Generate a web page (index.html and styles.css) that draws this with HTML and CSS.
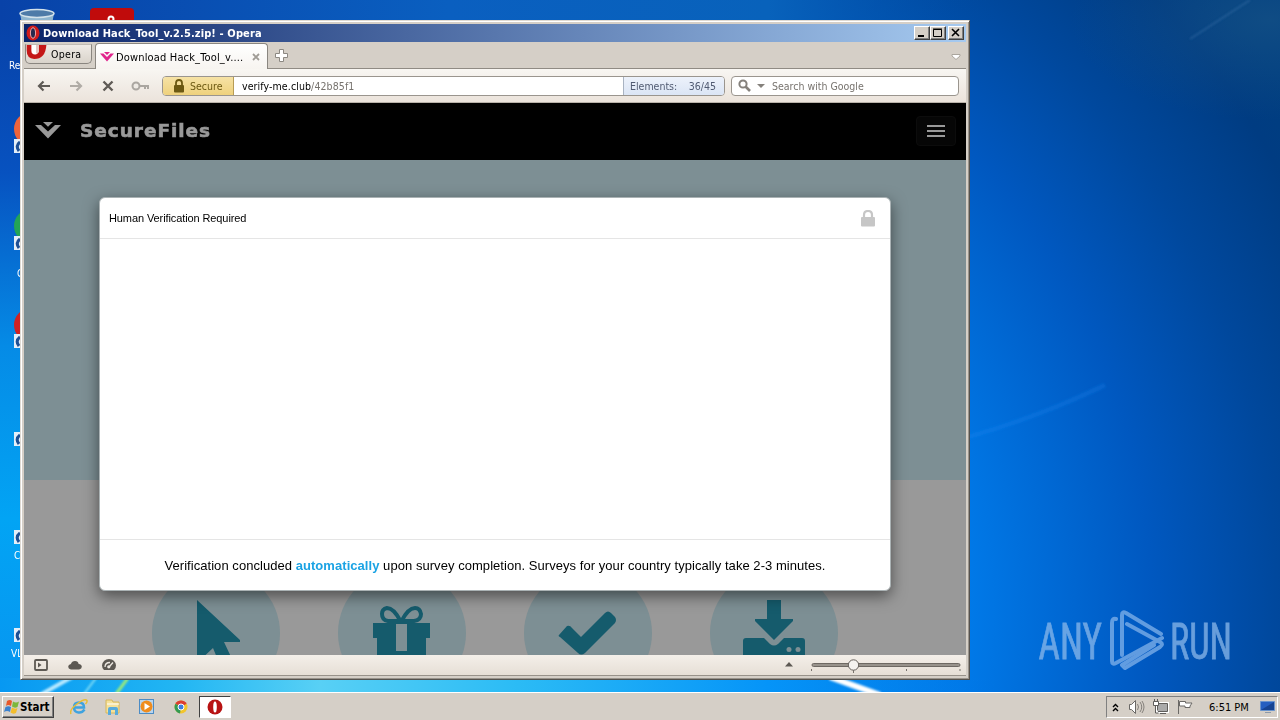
FILE: index.html
```
<!DOCTYPE html>
<html lang="en">
<head>
    <meta charset="UTF-8">
    <title>Download Hack_Tool_v.2.5.zip! - Opera</title>
    <link rel="stylesheet" href="styles.css">
</head>
<body>
    <div class="desktop">
        <svg class="wallpaper" width="1280" height="692" viewBox="0 0 1280 692">
            <defs>
                <radialGradient id="sky" gradientUnits="userSpaceOnUse" cx="480" cy="610" r="960">
                    <stop offset="0" stop-color="#18a8fa"/>
                    <stop offset=".3" stop-color="#0694f4"/>
                    <stop offset=".51" stop-color="#0079e8"/>
                    <stop offset=".7" stop-color="#0058c0"/>
                    <stop offset=".83" stop-color="#00489d"/>
                    <stop offset=".95" stop-color="#003c82"/>
                    <stop offset="1" stop-color="#003e80"/>
                </radialGradient>
                <linearGradient id="left" x2="0" y2="1">
                    <stop offset="0" stop-color="#0840a5"/>
                    <stop offset=".25" stop-color="#0752c0"/>
                    <stop offset=".5" stop-color="#058be6"/>
                    <stop offset=".75" stop-color="#02a4f4"/>
                    <stop offset="1" stop-color="#0795f0"/>
                </linearGradient>
                <linearGradient id="top">
                    <stop offset="0" stop-color="#0842a8"/>
                    <stop offset=".35" stop-color="#0a5fc0"/>
                    <stop offset=".6" stop-color="#0862bb"/>
                    <stop offset=".78" stop-color="#00489a" stop-opacity="0"/>
                </linearGradient>
                <linearGradient id="bottom">
                    <stop offset="0" stop-color="#0798f2"/>
                    <stop offset=".14" stop-color="#22b6f3"/>
                    <stop offset=".25" stop-color="#58d0f5"/>
                    <stop offset=".4" stop-color="#2cbcf5"/>
                    <stop offset=".6" stop-color="#0594f8"/>
                    <stop offset=".78" stop-color="#0075e8" stop-opacity="0"/>
                </linearGradient>
                <radialGradient id="haze">
                    <stop offset="0" stop-color="#1f5a88" stop-opacity=".5"/>
                    <stop offset="1" stop-color="#1c5488" stop-opacity="0"/>
                </radialGradient>
                <filter id="soft"><feGaussianBlur stdDeviation="1.2"/></filter>
            </defs>
            <rect width="1280" height="692" fill="url(#sky)"/>
            <rect width="24" height="692" fill="url(#left)"/>
            <rect width="1280" height="22" fill="url(#top)"/>
            <rect y="678" width="1280" height="14" fill="url(#bottom)"/>
            <ellipse cx="1270" cy="20" rx="200" ry="100" fill="url(#haze)"/>
            <g filter="url(#soft)" fill="none">
                <path d="M1190 39L1250 0" stroke="#3b73ab" stroke-width="2" opacity=".45"/>
                <path d="M968 437C1020 422 1060 407 1105 385" stroke="#1b8cf5" stroke-width="5" opacity=".22"/>
                <path d="M830 677L880 695" stroke="#fff" stroke-width="6"/>
                <path d="M72 677L40 695" stroke="#b9eaff" stroke-width="4"/>
                <path d="M96 678L84 694" stroke="#7fdcf5" stroke-width="2"/>
                <path d="M128 678L116 694" stroke="#9beb7a" stroke-width="3"/>
            </g>
        </svg>

        <!-- desktop shortcuts, mostly hidden by the window -->
        <svg class="shortcuts" width="140" height="692" viewBox="0 0 140 692">
            <path d="M20 13L25 42H49L54 13Z" fill="#8fb5cf"/>
            <ellipse cx="37" cy="13.5" rx="17" ry="4" fill="#4e7ba8" stroke="#d4e2ea" stroke-width="1.500"/>
            <rect x="90" y="8" width="44" height="40" rx="4" fill="#c00b0b"/>
            <circle cx="111" cy="19" r="2.5" fill="none" stroke="#fff" stroke-width="2"/>
            <circle cx="31" cy="129" r="17" fill="#f0643a"/>
            <circle cx="31" cy="226" r="17" fill="#23a455"/>
            <circle cx="31" cy="325" r="17" fill="#d02222"/>
            <g fill="#e4eef8">
                <path d="M14 139h10v14H14zM14 236h10v14H14zM14 334h10v14H14zM14 432h10v14H14zM14 530h10v14H14zM14 628h10v14H14z"/>
            </g>
            <path d="M20 142q-5 4-1 9M20 239q-5 4-1 9M20 337q-5 4-1 9M20 435q-5 4-1 9M20 533q-5 4-1 9M20 631q-5 4-1 9" stroke="#1d4f94" stroke-width="3" fill="none"/>
            <g class="shortcut-label">
                <text x="9" y="69">Re</text>
                <text x="17" y="277">G</text>
                <text x="14" y="559">C</text>
                <text x="11" y="657">VL</text>
            </g>
        </svg>

        <div class="window">
            <div class="titlebar">
                <svg width="14" height="16" viewBox="0 0 14 16"><ellipse cx="7" cy="8" rx="6.5" ry="7.5" fill="#cf1b1b"/><ellipse cx="7" cy="8" rx="2.6" ry="5.3" fill="#26294e" stroke="#f0a5a5"/></svg>
                <span class="title">Download Hack_Tool_v.2.5.zip! - Opera</span>
                <span class="winbtn"><svg width="14" height="12"><path d="M3 9h6" stroke="#000" stroke-width="2"/></svg></span>
                <span class="winbtn"><svg width="14" height="12"><path d="M2.5 2.5h8v7h-8zM2 2h9" stroke="#000" fill="none"/></svg></span>
                <span class="winbtn close"><svg width="14" height="12"><path d="M3 2l7 7M10 2l-7 7" stroke="#000" stroke-width="1.6"/></svg></span>
            </div>

            <div class="tabbar">
                <div class="opera-menu">
                    <svg width="22" height="15" viewBox="0 0 22 16"><path d="M0 0H21Q20 15 8 15Q0 14 0 6Z" fill="#c41717"/><path d="M5 0H13V7Q12 10 9 10Q5 10 5 6Z" fill="#fff"/><path d="M10 0h3v7q-1 2-3 2z" fill="#e4c5c1"/></svg>
                    <span>Opera</span>
                </div>
                <div class="tab">
                    <svg width="14" height="10" viewBox="0 0 28 20"><path d="M0 3H7L14 10L21 3H28L14 19ZM8 0H20L14 6Z" fill="#e0258c"/></svg>
                    <span>Download Hack_Tool_v....</span>
                    <svg class="tab-close" width="8" height="8"><path d="M1 1l6 6M7 1l-6 6" stroke="#a09c96" stroke-width="1.800"/></svg>
                </div>
                <svg class="newtab" width="13" height="13"><path d="M4.5.5h4v4h4v4h-4v4h-4v-4h-4v-4h4z" fill="#fff" stroke="#8c8882"/></svg>
                <svg class="tabmenu" width="10" height="7"><path d="M1 1.5h8v1.500l-4 3.500-4-3.500z" fill="#fff" stroke="#aaa59d"/></svg>
            </div>

            <div class="toolbar">
                <div class="nav">
                    <svg width="14" height="14" viewBox="0 0 14 14"><path d="M6.500 2.500L2 7l4.500 4.500M2 7h11" stroke="#5f5b56" stroke-width="2.200" fill="none"/></svg>
                    <svg width="14" height="14" viewBox="0 0 14 14"><path d="M7.500 2.500L12 7l-4.500 4.500M12 7H1" stroke="#b0aca6" stroke-width="2.200" fill="none"/></svg>
                    <svg width="14" height="14" viewBox="0 0 14 14"><path d="M2.500 2.500l9 9M11.500 2.500l-9 9" stroke="#5f5b56" stroke-width="2.400"/></svg>
                    <svg class="key" width="20" height="10" viewBox="0 0 20 10"><path d="M8.500 5H18M14 5v3M17 5v3" stroke="#aaa6a0" stroke-width="2" fill="none"/><circle cx="5" cy="5" r="3.500" fill="#eeeae4" stroke="#aaa6a0" stroke-width="2"/></svg>
                </div>
                <div class="address">
                    <div class="secure">
                        <svg width="12" height="14" viewBox="0 0 12 14"><path d="M3 7V4q0-3 3-3t3 3v3" stroke="#6b5812" stroke-width="1.800" fill="none"/><rect x="1" y="6" width="10" height="7.500" rx="1" fill="#6b5812"/></svg>
                        <span>Secure</span>
                    </div>
                    <div class="url">verify-me.club<span>/42b85f1</span></div>
                    <div class="elements"><span>Elements:</span><span>36/45</span></div>
                </div>
                <div class="search">
                    <svg width="13" height="13" viewBox="0 0 13 13"><circle cx="5" cy="5" r="3.600" stroke="#85817c" stroke-width="2" fill="none"/><path d="M7.500 7.500l4.500 4.500" stroke="#85817c" stroke-width="2.600"/></svg>
                    <svg width="8" height="4"><path d="M0 0h8l-4 4z" fill="#85817c"/></svg>
                    <span>Search with Google</span>
                </div>
            </div>

            <div class="page">
                <div class="navbar">
                    <svg width="26" height="17" viewBox="0 0 26 17"><path d="M0 3H6L13 9.500L20 3H26L13 16.500ZM8 0H18L13 4.800Z" fill="#999"/></svg>
                    <span class="brand">SecureFiles</span>
                    <div class="burger"><i></i><i></i><i></i></div>
                </div>
                <div class="hero"></div>
                <div class="steps">
                    <div class="step"><svg width="128" height="128" viewBox="0 0 128 128"><path d="M45 31L88 71V73H72L80 90L68 96L61 79L45 94Z"/></svg></div>
                    <div class="step"><svg width="128" height="128" viewBox="0 0 128 128"><path d="M35 54H92V69H88V96H39V69H35Z"/><path d="M58 55h11v27H58z" fill="#7d8f94"/><path d="M63 53Q56 39 49 39Q44 40 44 45Q44 51 50 52H76Q83 51 83 45Q82 39 77 39Q70 39 63 53" fill="none" stroke="#155b6c" stroke-width="4"/></svg></div>
                    <div class="step"><svg width="128" height="128" viewBox="0 0 128 128"><path d="M35 66L43 57Q46 56 48 59L57 68L81 44Q84 41 87 44L91 48Q93 51 91 54L61 84Q57 87 54 84L36 68Q34 67 35 66"/></svg></div>
                    <div class="step"><svg width="128" height="128" viewBox="0 0 128 128"><path d="M57 31H71V50H83V52L64 71L45 52V50H57Z"/><path d="M33 72Q33 69 36 69H54L60 75Q64 78 68 75L74 69H92Q95 69 95 72V96H33Z"/><circle cx="79" cy="80.500" r="2.500" fill="#7d8f94"/><circle cx="88" cy="80.500" r="2.500" fill="#7d8f94"/></svg></div>
                </div>

                <div class="modal">
                    <div class="modal-header">
                        <span>Human Verification Required</span>
                        <svg width="14" height="17" viewBox="0 0 14 17"><path d="M3 8V5q0-4 4-4t4 4v3" stroke="#c6c6c6" stroke-width="2.200" fill="none"/><rect y="7" width="14" height="9.500" rx="1" fill="#c6c6c6"/></svg>
                    </div>
                    <div class="modal-body"></div>
                    <div class="modal-footer">Verification concluded <b>automatically</b> upon survey completion. Surveys for your country typically take 2-3 minutes.</div>
                </div>
            </div>

            <div class="statusbar">
                <svg width="14" height="12"><rect x="1" y="1" width="12" height="10" rx="1" fill="none" stroke="#5d5953" stroke-width="1.800"/><path d="M4 3.500l3.500 2.500-3.500 2.500z" fill="#5d5953"/></svg>
                <svg width="14" height="10" viewBox="0 0 15 11"><path d="M3 10.500Q0 10 0 7.500Q0 5 3 4.500Q4 1 7.500 1Q11 1 11.500 4.500Q15 5 15 7.500Q15 10 12 10.500Z" fill="#5d5953"/></svg>
                <svg width="14" height="12"><path d="M2 11Q0 9 0 6.500Q1 0 7 0Q13 0 14 6.500Q14 9 12 11Z" fill="#5d5953"/><path d="M3 8Q3 3.500 8 3.500M7 8l4-4.500" stroke="#eee9e2" stroke-width="1.300" fill="none"/><circle cx="6.800" cy="7.800" r="1.600" fill="#eee9e2"/></svg>
                <svg class="up" width="8" height="5"><path d="M0 4.500L4 0l4 4.500z" fill="#5d5953"/></svg>
                <svg class="zoom" width="150" height="16"><rect x="1" y="6.500" width="148" height="3" rx="1.500" fill="#98938c" stroke="#6e6963"/><path d="M.5 12v2M42.500 13v3M95.500 12v2M149 12v2" stroke="#77726c"/><circle cx="42.500" cy="8" r="5.200" fill="#f4f2ef" stroke="#66615c"/></svg>
            </div>
        </div>

        <svg class="watermark" width="196" height="66" viewBox="0 0 196 66">
            <g fill="#8bb8ea" stroke="#8bb8ea" stroke-width=".8" opacity=".75">
                <text x="1" y="51" transform="scale(.62 1)" textLength="102" lengthAdjust="spacingAndGlyphs">ANY</text>
                <text x="213" y="51" transform="scale(.62 1)" textLength="100" lengthAdjust="spacingAndGlyphs">RUN</text>
            </g>
            <g fill="none" stroke="#73a8e6" stroke-width="4" stroke-linejoin="round" stroke-linecap="round" opacity=".85">
                <path d="M78 11Q74 10 74 15V53Q74 57 78 55L124 30"/>
                <path d="M84 47V7Q84 3 88 5L123 26"/>
                <path d="M89 16L122 34Q126 36 122 39L87 60L84 57L116 37"/>
            </g>
        </svg>
    </div>

    <div class="taskbar">
        <div class="start">
            <svg width="16" height="16" viewBox="0 0 16 16"><path d="M3 2q3-2 5 0L7 7q-3-2-5 0z" fill="#e8582a"/><path d="M9 2.500q3 2 6 0L13.500 8q-3 1.500-5.500-.5z" fill="#7cb73a"/><path d="M1.500 8q3-1.500 5.500 0L6 13q-3-2-6 0z" fill="#3b82cf"/><path d="M8 8.500q3 2 5.500.5L12 14q-3 1.500-5.500-.5z" fill="#f3bd2b"/></svg>
            <b>Start</b>
        </div>
        <div class="quick">
            <svg width="18" height="18" viewBox="0 0 18 18"><path d="M14.500 11.500Q12 15 8.500 14.500Q4 14 4 9.500Q4 4.500 9 4.500Q14 4.500 14 9.500H5" fill="none" stroke="#3fa3df" stroke-width="2.500"/><path d="M1 16Q-1 12 7 6T17 2.500Q17.500 4 15.500 6" fill="none" stroke="#e8bd35" stroke-width="1.500"/></svg>
            <svg width="18" height="18" viewBox="0 0 18 18"><path d="M2 2h6l1 2h6v11H2z" fill="#f5e19a" stroke="#d5b75c"/><path d="M4 17v-6q0-2 2-2h6q2 0 2 2v6h-3v-5H7v5z" fill="#58abdc"/><path d="M3 6h12" stroke="#fff"/></svg>
            <svg width="18" height="18" viewBox="0 0 18 18"><rect x="1.500" y="1.500" width="14" height="14" fill="#b9d5ee" stroke="#4c8cc5"/><circle cx="8.500" cy="8.500" r="6" fill="#ef8c1e"/><path d="M6.500 5l5.500 3.500L6.500 12z" fill="#fff"/></svg>
            <svg width="18" height="18" viewBox="0 0 18 18"><circle cx="9" cy="9" r="6.500" fill="#f2c52c"/><path d="M9 9L3.400 5.700A6.500 6.500 0 0 1 14.600 5.700Z" fill="#dc3e32"/><path d="M9 9L3.400 5.700A6.500 6.500 0 0 0 8 15.400Z" fill="#349a52"/><circle cx="9" cy="9" r="3" fill="#3d7fe0" stroke="#fff"/></svg>
        </div>
        <div class="task">
            <svg width="16" height="16" viewBox="0 0 16 16"><ellipse cx="8" cy="8" rx="7.500" ry="7.500" fill="#b81212"/><ellipse cx="8" cy="8" rx="1.800" ry="5.500" fill="#fff"/></svg>
        </div>
        <div class="tray">
            <svg width="7" height="9"><path d="M1 4l2.500-2.500L6 4M1 8l2.500-2.500L6 8" fill="none" stroke="#000" stroke-width="1.400"/></svg>
            <svg class="sound" width="17" height="16"><path d="M1.500 5.500h2l4-4v13l-4-4h-2z" fill="#fff" stroke="#6b6966"/><path d="M9.500 5q2 3 0 6M12 3q3.500 5 0 10M14 2q4 6 0 12" fill="none" stroke="#85817c"/></svg>
            <svg class="net" width="16" height="16"><path d="M4.500 4.500h10v8h-10z" fill="#aaa" stroke="#fff" stroke-width="3"/><path d="M4.500 4.500h10v8h-10zM7 14.500h6" fill="#aaa" stroke="#5f5d5b"/><path d="M.5 2.500h5v4h-5zM1.500 0v2M4.500 0v2M2.500 7v7h3" fill="#fff" stroke="#5f5d5b"/></svg>
            <svg class="flag" width="17" height="16"><path d="M1.500 1v14M2.500 2.500h6v1.500h6.500l-2 3 0 1.500h-5v-1.500H2.500z" fill="#fff" stroke="#6b6966"/></svg>
            <span class="clock">6:51 PM</span>
            <svg class="show" width="16" height="14"><path d="M.5 1.500h14v9H.5z" fill="#255fc0" stroke="#6a94cc"/><path d="M1 10L14 2v8z" fill="#164492"/><path d="M5 12.500h6" stroke="#8b99aa"/></svg>
        </div>
    </div>
</body>
</html>
```
FILE: styles.css
```
* { box-sizing: border-box; }
body {
    margin: 0;
    width: 1280px;
    height: 720px;
    overflow: hidden;
    font-family: "DejaVu Sans Condensed", "DejaVu Sans", sans-serif;
    font-stretch: condensed;
    font-size: 11px;
    color: #000;
}
svg { display: block; flex: none; }
span, b { white-space: nowrap; }

.desktop { position: relative; height: 692px; overflow: hidden; background: #0079e8; }
.wallpaper, .shortcuts { position: absolute; left: 0; top: 0; }
.shortcut-label { fill: #fff; font-size: 10px; }
.watermark { position: absolute; left: 1038px; top: 608px; }
.watermark text { font-family: Roboto, sans-serif; font-size: 50px; font-weight: 400; }

/* window */
.window {
    position: absolute;
    left: 20px;
    top: 20px;
    width: 950px;
    height: 660px;
    padding: 3px;
    background: #d5cfc7;
    border: 1px solid;
    border-color: #ded9d2 #55524e #55524e #ded9d2;
    box-shadow: inset 1px 1px #fff, inset -1px -1px #99938b;
    display: flex;
    flex-direction: column;
}
.titlebar {
    height: 18px;
    display: flex;
    align-items: center;
    padding: 0 2px;
    background: linear-gradient(90deg, #0a246a, #a6caf0);
    color: #fff;
    font-weight: bold;
}
.title { flex: 1; margin-left: 3px; font-size: 11px; letter-spacing: 0.12px; }
.winbtn {
    width: 16px;
    height: 14px;
    background: #d5cfc7;
    border: 1px solid;
    border-color: #fff #404040 #404040 #fff;
    box-shadow: inset -1px -1px #808080;
}
.close { margin-left: 2px; }

.tabbar {
    height: 27px;
    display: flex;
    background: #d5cfc7;
    border-bottom: 1px solid #908b84;
}
.opera-menu {
    width: 67px;
    height: 20px;
    margin: 2px 0 0 1px;
    display: flex;
    border: 1px solid #8a8680;
    border-top-color: #c0bbb4;
    border-radius: 0 0 5px 5px;
    background: linear-gradient(#efebe6, #d9d3cb);
}
.opera-menu span { margin: 3px 0 0 3px; font-size: 10.5px; letter-spacing: 0.3px; }
.tab {
    width: 173px;
    height: 26px;
    margin: 1px 0 0 3px;
    padding: 0 7px 0 4px;
    display: flex;
    align-items: center;
    border: 1px solid #8a8680;
    border-bottom: 0;
    border-radius: 4px 4px 0 0;
    background: linear-gradient(#fff, #f7f4f0);
}
.tab span { margin: 1px 0 0 2px; flex: 1; font-size: 11px; letter-spacing: 0.16px; }
.newtab { margin: 7px 0 0 7px; }
.tabmenu { margin: 11px 5px 0 auto; }

.toolbar {
    height: 34px;
    display: flex;
    align-items: center;
    padding: 0 7px 0 13px;
    background: linear-gradient(#f8f6f2, #ebe3db);
    border-bottom: 1px solid #b9b2a9;
}
.nav { width: 125px; display: flex; align-items: center; gap: 18px; }
.key { margin-left: -2px; }
.address, .search {
    height: 20px;
    border: 1px solid #9a958e;
    border-radius: 4px;
    background: #fff;
    display: flex;
    align-items: center;
    overflow: hidden;
}
.address { width: 563px; }
.secure {
    width: 71px;
    height: 18px;
    padding-left: 10px;
    display: flex;
    align-items: center;
    gap: 5px;
    color: #6b5812;
    background: linear-gradient(#f6e2a5, #eed17d);
    border-right: 1px solid #b79c55;
}
.url { flex: 1; padding-left: 8px; font-size: 10.5px; letter-spacing: 0.1px; }
.url span { color: #77736e; }
.elements {
    width: 101px;
    height: 18px;
    padding: 1px 8px 0 6px;
    display: flex;
    align-items: center;
    justify-content: space-between;
    color: #515b72;
    background: linear-gradient(#edf2fb, #dbe5f5);
    border-left: 1px solid #a9b3c2;
}
.secure, .elements, .search { font-size: 10.5px; }
.search { width: 228px; margin-left: 6px; padding-left: 6px; color: #77736e; }
.search span { margin-left: 7px; }
.search svg + svg { margin-left: 6px; }

/* web page */
.page {
    position: relative;
    height: 552px;
    overflow: hidden;
    background: #999;
    font-family: "Liberation Sans", Arial, sans-serif;
}
.navbar {
    height: 57px;
    display: flex;
    align-items: center;
    padding: 0 10px 2px 11px;
    background: #000;
}
.brand {
    flex: 1;
    margin-left: 19px;
    color: #999;
    font-family: "DejaVu Sans", sans-serif;
    font-stretch: normal;
    font-size: 18.5px;
    font-weight: bold;
    letter-spacing: 0.95px;
    -webkit-text-stroke: 0.6px #999;
}
.burger {
    width: 40px;
    height: 30px;
    display: flex;
    flex-direction: column;
    align-items: center;
    justify-content: center;
    gap: 3px;
    background: #060606;
    border: 1px solid #0c0c0c;
    border-radius: 4px;
}
.burger i { width: 18px; height: 2px; background: #999; }
.hero { height: 320px; background: #7d8f94; }
.steps { display: flex; gap: 58px; padding: 89px 0 0 128px; }
.step {
    width: 128px;
    height: 128px;
    flex: none;
    border-radius: 50%;
    background: #7d8f94;
    fill: #155b6c;
}
.modal {
    position: absolute;
    left: 75px;
    top: 94px;
    width: 792px;
    height: 394px;
    display: flex;
    flex-direction: column;
    background: #fff;
    border: 1px solid #aab2b4;
    border-radius: 6px;
    box-shadow: 0 5px 15px rgba(0, 0, 0, 0.5);
}
.modal-header {
    height: 41px;
    display: flex;
    align-items: center;
    justify-content: space-between;
    padding: 0 15px 0 9px;
    font-size: 11px;
    letter-spacing: -0.1px;
    border-bottom: 1px solid #e5e5e5;
}
.modal-body { flex: 1; }
.modal-footer {
    height: 51px;
    line-height: 51px;
    text-align: center;
    white-space: nowrap;
    font-size: 13px;
    letter-spacing: 0.05px;
    border-top: 1px solid #e5e5e5;
}
.modal-footer b { color: #1ba3e4; }

.statusbar {
    flex: 1;
    display: flex;
    align-items: center;
    padding: 0 5px 1px 10px;
    gap: 20px;
    background: linear-gradient(#f4efe9, #e6dfd6);
    border-bottom: 1px solid #98928a;
}
.up { margin-left: auto; }
.zoom { margin-left: -2px; }

/* taskbar */
.taskbar {
    height: 28px;
    padding: 3px 2px 2px;
    display: flex;
    align-items: center;
    background: #d5cfc7;
    border-top: 1px solid #fff;
}
.start {
    width: 52px;
    height: 22px;
    display: flex;
    align-items: center;
    padding-left: 1px;
    border: 1px solid;
    border-color: #fff #404040 #404040 #fff;
    box-shadow: inset -1px -1px #808080;
}
.start b { font-size: 11.5px; }
.quick { display: flex; gap: 16px; margin-left: 16px; }
.task {
    width: 32px;
    height: 22px;
    margin-left: 9px;
    display: flex;
    align-items: center;
    justify-content: center;
    background: #fff;
    border: 1px solid;
    border-color: #404040 #fff #fff #404040;
}
.tray {
    width: 172px;
    height: 22px;
    margin-left: auto;
    padding-left: 5px;
    display: flex;
    align-items: center;
    border: 1px solid;
    border-color: #808080 #fff #fff #808080;
}
.sound { margin-left: 9px; }
.net { margin-left: 8px; }
.flag { margin-left: 8px; }
.clock { margin-left: 15px; width: 43px; font-size: 11px; }
.show { margin-left: 8px; }
```
